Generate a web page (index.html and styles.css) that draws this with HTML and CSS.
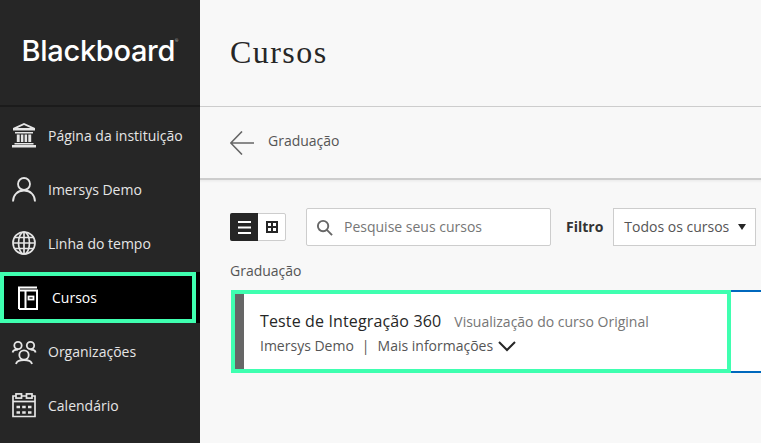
FILE: index.html
```html
<!DOCTYPE html>
<html lang="pt">
<head>
<meta charset="utf-8">
<title>Cursos</title>
<link rel="stylesheet" href="styles.css">
</head>
<body>
<div class="app">
  <nav class="sidebar">
    <div class="brand"><span class="logo">Blackboard</span><span class="tm">®</span></div>
    <ul class="menu">
      <li class="item">
        <svg class="ico" viewBox="0 0 24 24" fill="currentColor"><path fill-rule="evenodd" d="M12 0 1 5v2.500h22V5zM12 2l6.500 3h-13zM3 9h18v1.500H3zM4.800 11.500h2.900V19H4.800zM8.900 11.500h2.500V19H8.900zM12.600 11.500h2.500V19h-2.500zM16.300 11.500h2.900V19h-2.900zM2.500 20h19v1.500h-19zM0 22h24v2.500H0z"/></svg>
        <span>Página da instituição</span>
      </li>
      <li class="item">
        <svg class="ico" viewBox="0 0 24 24" fill="none" stroke="currentColor" stroke-width="1.800"><circle cx="12" cy="7" r="6"/><path d="M1 24.500c0-6.500 4.500-11 11-11s11 4.500 11 11"/></svg>
        <span>Imersys Demo</span>
      </li>
      <li class="item">
        <svg class="ico" viewBox="0 0 24 24" fill="none" stroke="currentColor" stroke-width="1.700"><circle cx="12" cy="12" r="11"/><ellipse cx="12" cy="12" rx="5.500" ry="11"/><path d="M12 1v22M2.500 6.500h19M1 12h22M2.500 17.500h19"/></svg>
        <span>Linha do tempo</span>
      </li>
      <li class="item active">
        <svg class="ico ico-c" viewBox="0 0 20 24" fill="none" stroke="currentColor" stroke-width="2"><path d="M1 23V1.500h18M1 4.500h18V23H1M7.500 4.500V23"/><rect x="10.500" y="10.500" width="5" height="3" stroke-width="1.800"/></svg>
        <span>Cursos</span>
      </li>
      <li class="item">
        <svg class="ico" viewBox="0 0 24 24" fill="none" stroke="currentColor" stroke-width="1.800"><circle cx="6" cy="6.500" r="3.700"/><circle cx="18.500" cy="6.500" r="3.700"/><circle cx="12" cy="16" r="4.700"/><path d="M.6 13.500C1 11.500 3 10.500 6 10.500M23.600 13.500C23.200 11.500 21.500 10.500 18.500 10.500M4 25c.5-2.500 4-4 8-4s7.500 1.500 8 4"/></svg>
        <span>Organizações</span>
      </li>
      <li class="item">
        <svg class="ico" viewBox="0 0 24 24" fill="none" stroke="currentColor" stroke-width="1.700"><path d="M4 3H1v20.500h22V3h-3M9.500 3h5"/><rect x="4" y=".9" width="5.500" height="4.200"/><rect x="14.500" y=".9" width="5.500" height="4.200"/><path d="M1 8.500h22"/><path d="M4.500 14h3.500M10.200 14h3.500M16 14h3.500M4.500 19.500h3.500M10.200 19.500h3.500M16 19.500h3.500" stroke-width="2.600"/></svg>
        <span>Calendário</span>
      </li>
    </ul>
  </nav>
  <main class="main">
    <header class="top"><h1>Cursos</h1></header>
    <div class="crumb">
      <svg class="back" viewBox="0 0 24 24" fill="none" stroke="#666" stroke-width="1.600"><path d="M24 12H1.500M12 .5.800 12 12 23.500"/></svg>
      <span class="crumb-text">Graduação</span>
    </div>
    <div class="content">
      <div class="toolbar">
        <div class="toggle">
          <span class="tg on"><svg viewBox="0 0 13 13" width="13" height="13" fill="#fff"><path d="M0 0h13v2H0zM0 5.500h13v2H0zM0 11h13v2H0z"/></svg></span>
          <span class="tg"><svg viewBox="0 0 12 12" width="12" height="12"><path fill="#262626" fill-rule="evenodd" d="M0 0h12v12H0zM2 2v3h3V2zm5 0v3h3V2zM2 7v3h3V7zm5 0v3h3V7z"/></svg></span>
        </div>
        <div class="search">
          <svg viewBox="0 0 18 18" width="17" height="17" fill="none" stroke="#666" stroke-width="2"><circle cx="7.500" cy="7.500" r="5.500"/><path d="m11.500 11.500 5.500 5.500"/></svg>
          <span class="lbl">Pesquise seus cursos</span>
        </div>
        <b class="flabel lbl">Filtro</b>
        <div class="select"><span class="lbl">Todos os cursos</span><i class="caret"></i></div>
      </div>
      <div class="term">Graduação</div>
      <div class="row">
        <div class="card">
          <div class="stripe"></div>
          <div class="info">
            <div class="l1"><span class="name">Teste de Integração 360</span><span class="view">Visualização do curso Original</span></div>
            <div class="l2"><span>Imersys Demo</span><span class="sep">|</span><span>Mais informações</span>
              <svg viewBox="0 0 18 11" width="18" height="11" fill="none" stroke="#262626" stroke-width="2"><path d="m1 1 8 8 8-8"/></svg>
            </div>
          </div>
        </div>
      </div>
    </div>
  </main>
</div>
</body>
</html>
```
FILE: styles.css
```css
* { box-sizing: border-box; }
html, body { margin: 0; height: 100%; overflow: hidden; }
body { font-family: "Open Sans", sans-serif; background: #f8f8f8; color: #262626; }
.app { display: flex; height: 443px; width: 761px; overflow: hidden; }
.sidebar { width: 200px; flex: none; background: #262626; color: #e5e5e5; }
.brand { height: 107px; border-bottom: 2px solid #1b1b1b; display: flex; justify-content: center; padding-top: 33px; }
.logo { font-family: Inter, "Liberation Sans", sans-serif; font-weight: 500; font-size: 29px; line-height: 36px; color: #fff; letter-spacing: -0.3px; }
.tm { font-size: 4px; line-height: 16px; color: #ccc; }
.menu { list-style: none; margin: 0; padding: 1px 0 0; }
.item { height: 54px; display: flex; align-items: center; gap: 12px; padding-left: 12px; font-size: 14px; }
.lbl { padding-bottom: 2px; }
.ico { width: 24px; height: 24px; flex: none; overflow: visible; }
.active { height: 51px; margin: 2px 4px 1px 0; background: #000; color: #fff; border: 4px solid #3fffb0; box-shadow: 4px 0 0 #000; padding-left: 14px; gap: 14px; }
.ico-c { width: 20px; height: 24px; }
.main { flex: 1; min-width: 0; }
.top { height: 107px; border-bottom: 1px solid #cdcdcd; padding: 33px 0 0 30px; }
h1 { margin: 0; font-family: "Liberation Serif", serif; font-weight: 400; font-size: 32px; line-height: 38px; letter-spacing: 1.45px; color: #262626; }
.crumb { height: 73px; border-bottom: 2px solid #cdcdcd; display: flex; align-items: center; padding-left: 30px; gap: 14px; font-size: 14px; color: #555; }
.crumb-text { padding-bottom: 4px; }
.back { width: 24px; height: 24px; }
.content { padding: 28px 0 0 30px; background: linear-gradient(#ececec, #f8f8f8 3px) no-repeat; }
.toolbar { display: flex; align-items: center; height: 38px; }
.toggle { display: flex; height: 28px; width: 56px; border: 1px solid #cdcdcd; border-radius: 2px; background: #fff; margin-right: 20px; }
.tg { flex: 1; display: flex; align-items: center; justify-content: center; }
.tg.on { flex: none; width: 28px; background: #262626; margin: -1px 0 -1px -1px; border-radius: 2px 0 0 2px; }
.search { width: 245px; height: 38px; border: 1px solid #cdcdcd; border-radius: 2px; background: #fff; display: flex; align-items: center; gap: 11px; padding-left: 9px; font-size: 14px; color: #767676; margin-right: 15px; }
.flabel { font-size: 14px; color: #333; margin-right: 10px; }
.select { width: 143px; height: 38px; flex: none; border: 1px solid #cdcdcd; background: #fff; display: flex; align-items: center; padding-left: 10px; font-size: 14px; color: #555; }
.caret { margin-left: 9px; border: 4px solid transparent; border-top: 6px solid #262626; border-bottom: 0; }
.term { margin-top: 15px; font-size: 14px; line-height: 20px; color: #555; }
.row { margin: 9px 0 0 1px; height: 83px; border-top: 2px solid #0068bd; border-bottom: 2px solid #0068bd; background: #fff; position: relative; }
.card { position: absolute; left: 0; top: -2px; width: 500px; height: 83px; display: flex; border: 4px solid #3fffb0; background: #fff; }
.stripe { width: 9px; background: #666; }
.info { padding: 15px 0 0 16px; }
.l1 { display: flex; align-items: baseline; gap: 13px; line-height: 24px; }
.name { font-size: 16px; letter-spacing: 0.14px; color: #262626; }
.view { font-size: 14px; color: #767676; }
.l2 { display: flex; align-items: center; font-size: 14px; color: #555; line-height: 24px; }
.sep { margin: 0 8px; }
.l2 svg { margin-left: 5px; }
```
